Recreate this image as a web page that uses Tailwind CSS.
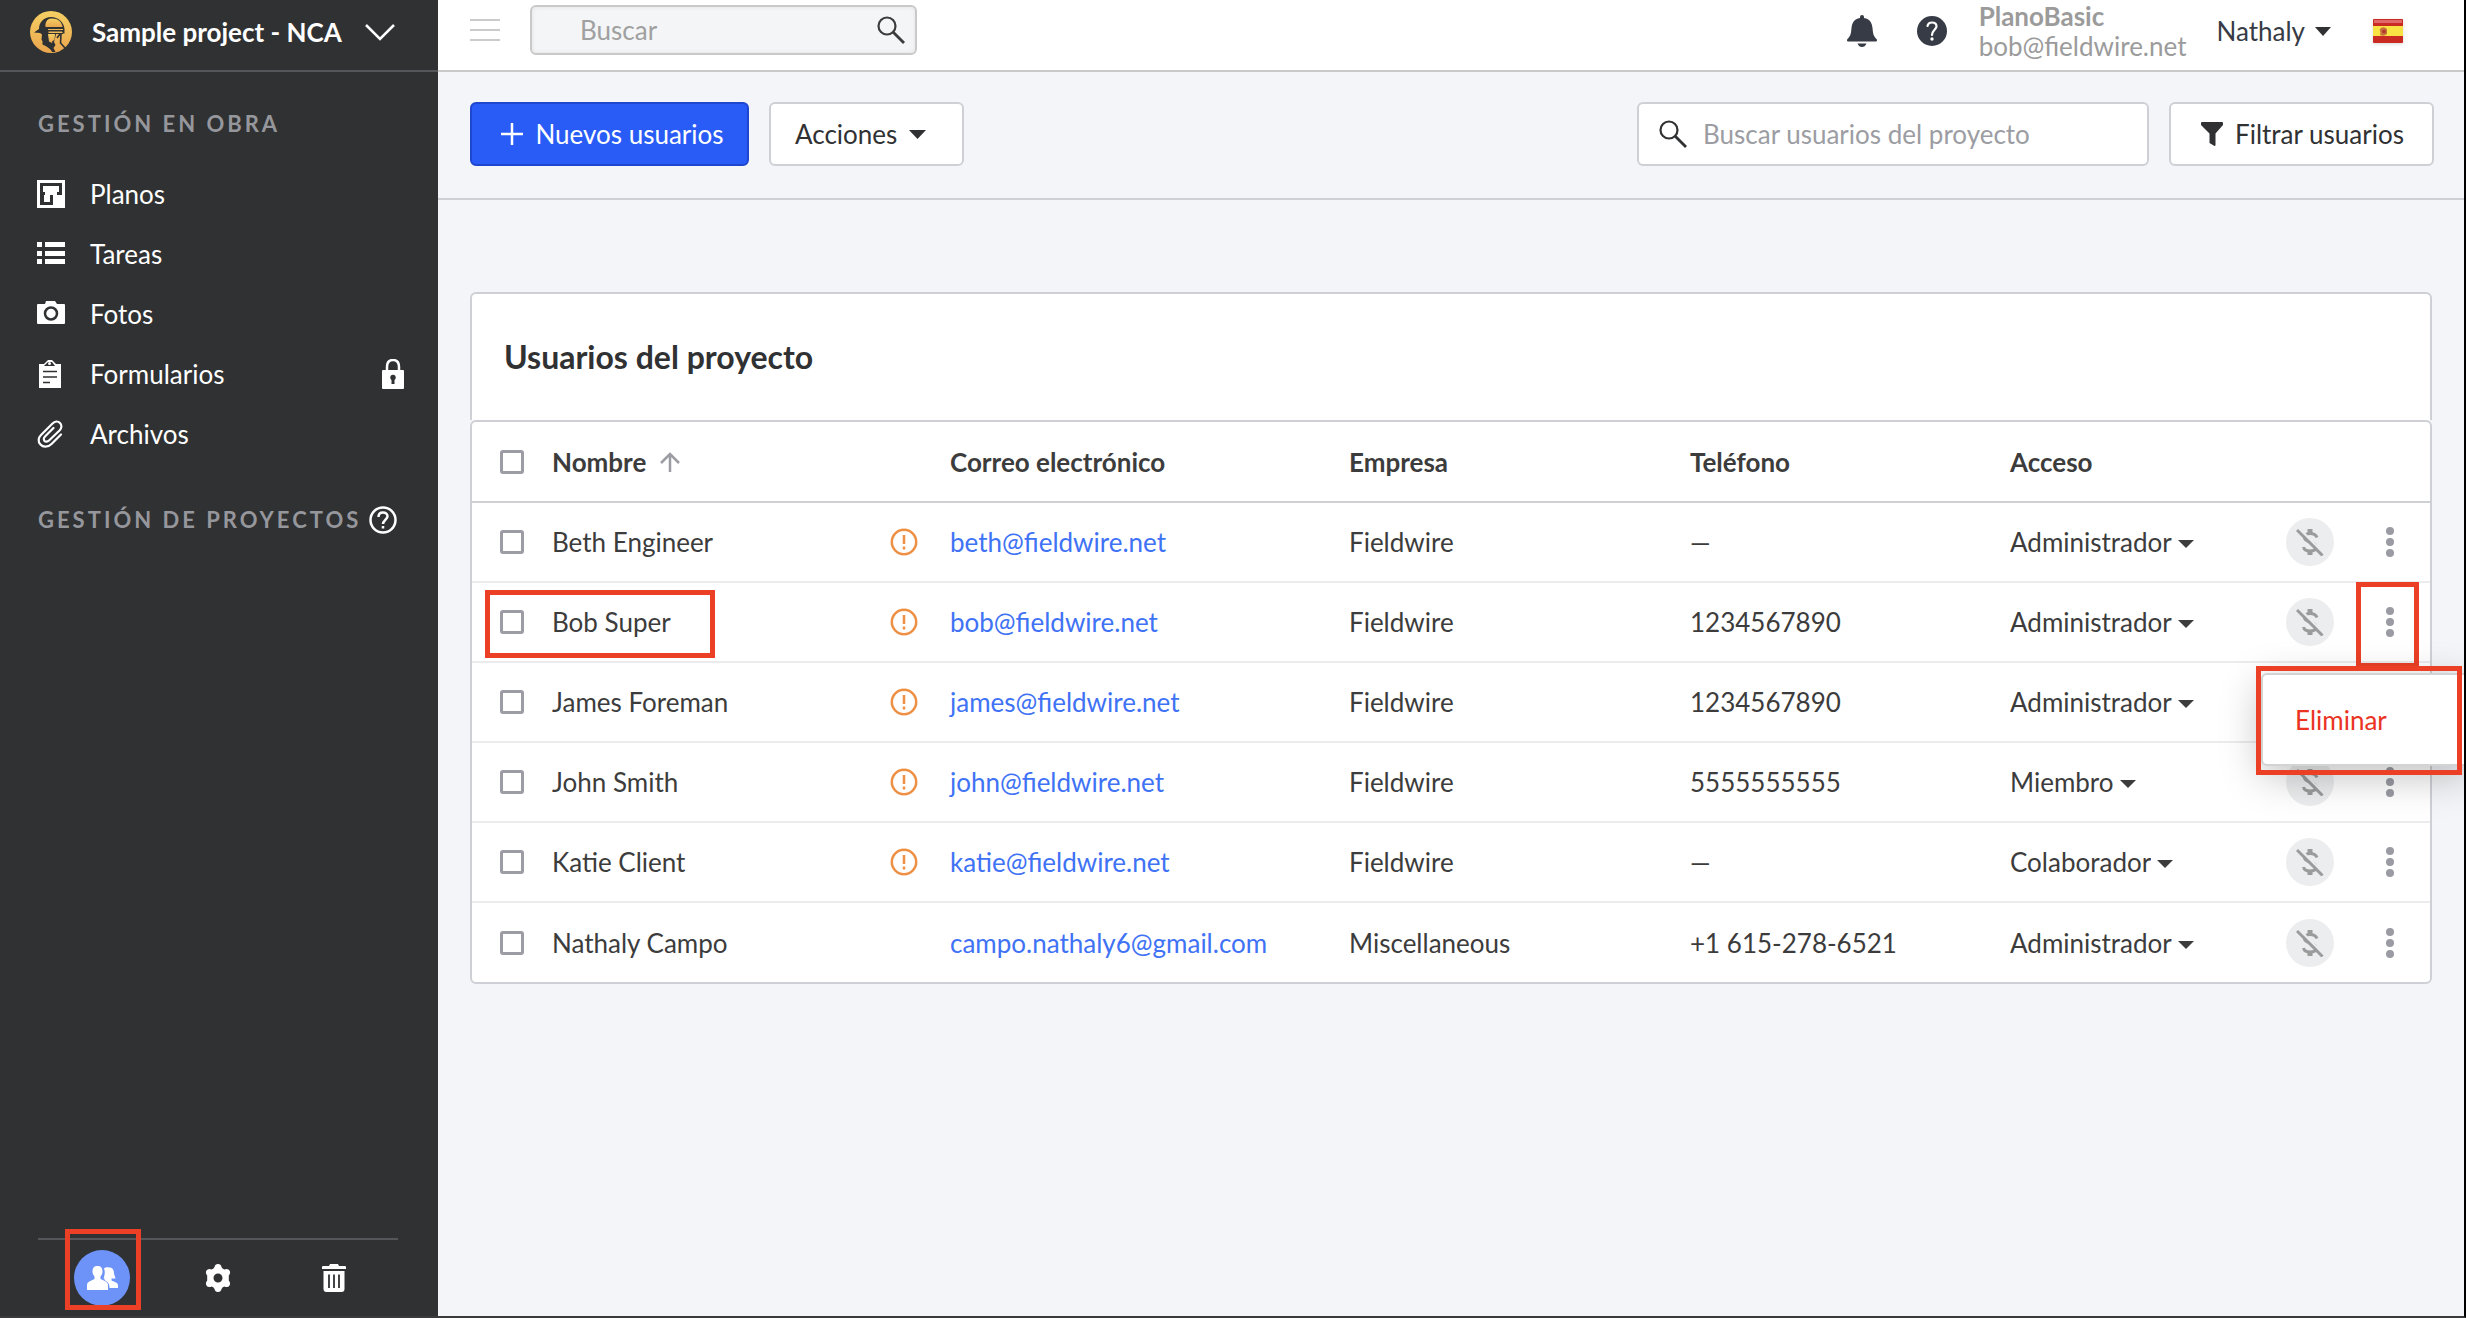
<!DOCTYPE html>
<html lang="es">
<head>
  <meta charset="UTF-8" />
  <meta name="viewport" content="width=device-width, initial-scale=1.0"/>
  <title>Usuarios del proyecto</title>
  <script src="https://cdn.jsdelivr.net/npm/@tailwindcss/browser@4"></script>
</head>
<body class="min-h-screen flex overflow-x-hidden border-r-2 border-b-2 border-r-black border-b-[#3a3a3c] bg-[#f4f5f8] font-[Lato,sans-serif] text-[26px] leading-8 text-[#3c3c3c]">

  <!-- Sidebar -->
  <aside class="w-[438px] shrink-0 bg-[#303133] text-white flex flex-col">
    <button class="h-[72px] shrink-0 border-b-2 border-[#55565a] flex items-center pl-[30px] pb-1.5 text-left">
      <svg class="w-[42px] h-[42px]" viewBox="0 0 42 42">
        <defs>
          <linearGradient id="gold" x1="0" y1="0" x2="0" y2="1">
            <stop offset="0" stop-color="#f6cf63"/>
            <stop offset="1" stop-color="#eba64e"/>
          </linearGradient>
        </defs>
        <circle cx="21" cy="21" r="21" fill="url(#gold)"/>
        <path d="M4 21.5 9 18C9 11 14 6 21 6s13 5 13.500 12v4.500H33L32 20.500H18.500V22H33v1h-7l-1 4.500-1 3.500 1.500 3-2 3 2 4h-3.500c-1-2.500-3-3.500-5.500-5.500-1-1-3-1-4-2v-3l-1-2 .5-5-2-1.500Z" fill="#303133"/>
        <path d="M15.500 16c-.5-4 1-8 5.500-8.500 6-.5 11 3 11.500 8.500Z" fill="url(#gold)"/>
        <path d="M18 23h7l-.5 6-2 1-.5 2-3-1.500Z" fill="url(#gold)"/>
        <path d="M18 18.500h15" stroke="#efb95a" stroke-width="1"/>
        <path d="M30 23l-3 4M31 23l-.5 9 4.500 5" fill="none" stroke="#303133" stroke-width="1.600"/>
      </svg>
      <span class="ml-5 font-bold">Sample project - NCA</span>
      <svg class="ml-[22px] w-8 h-5" viewBox="0 0 32 20" fill="none" stroke="#fff" stroke-width="2.500"><path d="M2 3l14 14L30 3"/></svg>
    </button>

    <h2 class="mt-9 pl-[38px] text-[22px] font-bold tracking-[3px] text-[#96979c]">GESTIÓN EN OBRA</h2>
    <nav class="mt-6 flex flex-col">
      <a href="#planos" class="h-[60px] pl-[37px] flex items-center gap-[25px]">
        <svg class="w-7 h-7" viewBox="0 0 28 28"><path fill="#fff" fill-rule="evenodd" d="M0 0h28v28H0ZM3 3v22h13V15h-3v7H7v-7h1v-3H6V6h16v6h-2v3h5V3Z"/><path fill="#fff" d="M7 7h14v4h-2v4h-8v-3H7Z"/></svg>
        <span>Planos</span>
      </a>
      <a href="#tareas" class="h-[60px] pl-[37px] flex items-center gap-[25px]">
        <svg class="w-7 h-7" viewBox="0 0 28 28" fill="#fff"><path d="M0 2h5v5H0zM8 2h20v5H8zM0 11h5v5H0zM8 11h20v5H8zM0 19h5v5H0zM8 19h20v5H8z"/></svg>
        <span>Tareas</span>
      </a>
      <a href="#fotos" class="h-[60px] pl-[37px] flex items-center gap-[25px]">
        <svg class="w-7 h-7" viewBox="0 0 28 28"><path fill="#fff" d="M8 4l1-3h9l2 3h7q1 0 1 1v18q0 1-1 1H1q-1 0-1-1V5q0-1 1-1Z"/><circle cx="14" cy="13.500" r="6" fill="#fff" stroke="#303133" stroke-width="2.500"/></svg>
        <span>Fotos</span>
      </a>
      <a href="#formularios" class="h-[60px] pl-[37px] pr-[34px] flex items-center gap-[25px]">
        <svg class="w-7 h-7" viewBox="0 0 28 28"><path fill="#fff" d="M2 4h5l4-4h4l4 4h5v24H2Z"/><path d="M7 6h11l-3-4h-4Z" fill="#303133"/><circle cx="12.500" cy="3.500" r="1.500" fill="#fff"/><path d="M6 11.500h14M6 17h14M6 22.500h7" stroke="#303133" stroke-width="1.600"/></svg>
        <span>Formularios</span>
        <svg class="ml-auto w-[22px] h-[30px]" viewBox="0 0 22 30"><path d="M5 12V8q0-7 6-7t6 7v4" fill="none" stroke="#fff" stroke-width="2.500"/><rect y="11" width="22" height="19" rx="1" fill="#fff"/><circle cx="11" cy="18.500" r="2.700" fill="#303133"/><path d="M9.500 19h3v6h-3z" fill="#303133"/></svg>
      </a>
      <a href="#archivos" class="h-[60px] pl-[37px] flex items-center gap-[25px]">
        <svg class="w-7 h-7" viewBox="0 0 28 28" fill="none" stroke="#fff" stroke-width="2.200" stroke-linecap="round"><path d="M24 14.500 14.500 24C11 27.500 6 27.500 3.500 24.500c-3-3-2-7 .5-9.500L15.500 3.500C18 1 21 1 23 3s2 5-.5 7.500L12 20.500c-1.500 1.500-3.500 1.500-4.500.5s-1-3 .5-4.500L16.500 8"/></svg>
        <span>Archivos</span>
      </a>
    </nav>
    <div class="mt-10 pl-[38px] flex items-center">
      <h2 class="text-[22px] font-bold tracking-[3px] text-[#96979c]">GESTIÓN DE PROYECTOS</h2>
      <button aria-label="Ayuda" class="ml-2">
        <svg class="w-7 h-7" viewBox="0 0 28 28" fill="none" stroke="#fff" stroke-width="2.500"><circle cx="14" cy="14" r="12.500"/><path d="M9.500 11c0-3 2-4.500 4.500-4.500s4.500 1.500 4.500 4-4.500 4-4.500 7.500M14 20v2.500"/></svg>
      </button>
    </div>

    <!-- Bottom tools -->
    <div class="relative mt-auto ml-[38px] mr-10 mb-2.5 pt-2.5 border-t-2 border-[#55565a] flex items-center">
      <div class="absolute left-[27px] -top-[11px] w-[76px] h-[81px] border-[5px] border-[#eb4026]"></div>
      <button aria-label="Usuarios" class="ml-9 w-14 h-14 rounded-full bg-[#6d93f8] flex items-center justify-center">
        <svg class="w-[31px] h-6" viewBox="0 0 31 24" fill="#fff"><path d="M10.500 0c3.500 0 5 2 5 5.500 0 2-1 4-2 5v2.500c3 1.500 7.500 2.500 7.500 6V24H0v-5c0-3.500 5-4.500 7.500-6v-2.500c-1-1-2-3-2-5C5.500 2 7 0 10.500 0Z"/><path d="M17 2.500C18 1.500 20 1 22 1.500c4 0 5 3 5 6l1.500 5h-4v2c2 1 6.500 2 6.500 4.500v3h-8.500c0-5-2-6-5-8v-1.500h-1c1-3 2-6 .5-10Z"/></svg>
      </button>
      <button aria-label="Ajustes" class="ml-[74px]">
        <svg class="w-7 h-7" viewBox="0 0 28 28"><path fill="#fff" fill-rule="evenodd" d="M10.500 3Q11 0 14 0t3.500 3l1 1.500 1.800 1q3.700-1.500 5.200 1t-.7 5v5q2.200 2.500.7 5t-5.200 1l-1.800 1-1 1.500Q17 28 14 28t-3.500-3l-1-1.500-1.800-1q-3.700 1.500-5.200-1t.7-5v-5Q1 9 2.500 6.500t5.200-1l1.800-1ZM14 9.500a4.500 4.500 0 1 0 0 9 4.500 4.500 0 0 0 0-9Z"/></svg>
      </button>
      <button aria-label="Papelera" class="ml-[90px]">
        <svg class="w-6 h-7" viewBox="0 0 24 28"><path fill="#fff" d="M7 2l1-2h8l1 2h6q1 0 1 1v2H0V3q0-1 1-1ZM1.500 7h21v18q0 3-3 3h-15q-3 0-3-3Z"/><path d="M7 10.500V24M12 10.500V24M17 10.500V24" stroke="#303133" stroke-width="1.800"/></svg>
      </button>
    </div>
  </aside>

  <!-- Main column -->
  <div class="flex-1 min-w-0">
    <header class="h-[72px] bg-white border-b-2 border-[#c9c9c9] flex items-center pl-8 pr-[61px]">
      <button aria-label="Menú" class="w-[30px] h-[22px] flex flex-col justify-between mb-2.5">
        <span class="h-0.5 w-full bg-[#cbcbcb]"></span>
        <span class="h-0.5 w-full bg-[#cbcbcb]"></span>
        <span class="h-0.5 w-full bg-[#cbcbcb]"></span>
      </button>
      <label class="ml-[30px] mb-2.5 w-[387px] h-[50px] border-2 border-[#c9c9c9] rounded-md bg-[#f4f5f7] shadow-[inset_0_0_4px_#e2e2e2] flex items-center pl-12 pr-2.5">
        <input type="text" aria-label="Buscar" placeholder="Buscar" class="flex-1 min-w-0 outline-none placeholder:text-[#a0a0a0]">
        <svg class="w-7 h-7" viewBox="0 0 28 28" fill="none" stroke="#3c3c3c" stroke-width="2.200"><circle cx="10" cy="10" r="8.500"/><path d="M16 16l11 11" stroke-width="2.800"/></svg>
      </label>

      <div class="ml-auto mb-2 flex items-center">
        <button aria-label="Notificaciones">
          <svg class="w-[30px] h-8" viewBox="0 0 30 32" fill="#363b45"><path d="M13 2q0-2 2-2t2 2v1c6 1 8 5 8.500 10 .5 6 1 8 4 11 1 1 .5 2.500-1 2.500h-27C0 26.500-.5 25 .5 24c3-3 3.500-5 4-11C5 8 7 4 13 3ZM10.500 28.500h9Q18 32 15 32t-4.500-3.500Z"/></svg>
        </button>
        <button aria-label="Ayuda" class="ml-10">
          <svg class="w-[30px] h-[30px]" viewBox="0 0 30 30" fill="none"><circle cx="15" cy="15" r="15" fill="#363b45"/><path d="M10.500 10c.5-2.500 2-3.500 4.500-3.500s4.500 1.500 4.500 4-4.500 4-4.500 8.500" stroke="#fff" stroke-width="2.200" stroke-linecap="round"/><circle cx="15" cy="23" r="1.700" fill="#fff"/></svg>
        </button>
        <div class="ml-8 leading-[30px] text-[#9b9b9b]">
          <div class="font-bold">PlanoBasic</div>
          <div>bob@fieldwire.net</div>
        </div>
        <button class="ml-[30px] flex items-center gap-2.5 text-[#363b45]">Nathaly
          <svg class="w-4 h-[9px]" viewBox="0 0 16 9" fill="#303133"><path d="M0 0h16L8 9Z"/></svg>
        </button>
        <button aria-label="Idioma: español" class="ml-[42px]">
          <svg class="w-[30px] h-6 drop-shadow" viewBox="0 0 30 24"><rect width="30" height="24" rx="1" fill="#c92a22"/><path fill="#e0686a" d="M1 1h28v3H1z"/><path fill="#f8e244" d="M0 7h30v10H0z"/><path fill="#c8743a" d="M8 9q-2 1-1 3t0 4q4 2 7-1V10q-3-3-6-1Z"/><circle cx="11" cy="12.500" r="2" fill="#b3382c"/></svg>
        </button>
      </div>
    </header>

    <!-- Toolbar -->
    <div class="h-32 border-b-2 border-[#cfd0d6] flex items-center pl-8 pr-[30px] pb-0.5">
      <button class="w-[279px] h-16 rounded-md border-2 border-[#1e46cf] bg-[#295cf6] text-white flex items-center justify-center gap-3 pl-1.5">
        <svg class="w-[22px] h-[22px]" viewBox="0 0 22 22" stroke="#fff" stroke-width="2.500"><path d="M11 0v22M0 11h22"/></svg>
        Nuevos usuarios
      </button>
      <button class="ml-5 w-[195px] h-16 rounded-md border-2 border-[#cfd0d6] bg-white text-[#303133] flex items-center pl-6 gap-3">Acciones
        <svg class="w-[17px] h-[9px]" viewBox="0 0 17 9" fill="#303133"><path d="M0 0h17L8.500 9Z"/></svg>
      </button>
      <label class="ml-auto w-[512px] h-16 rounded-md border-2 border-[#cfd0d6] bg-white flex items-center pl-5 pr-4 gap-4">
        <svg class="w-7 h-7" viewBox="0 0 28 28" fill="none" stroke="#303133" stroke-width="2.200"><circle cx="10" cy="10" r="8.500"/><path d="M16 16l11 11" stroke-width="2.800"/></svg>
        <input type="text" aria-label="Buscar usuarios del proyecto" placeholder="Buscar usuarios del proyecto" class="flex-1 min-w-0 outline-none placeholder:text-[#9c9da3]">
      </label>
      <button class="ml-5 w-[265px] h-16 rounded-md border-2 border-[#cfd0d6] bg-white text-[#303133] flex items-center justify-center gap-3 pl-0.5">
        <svg class="w-[22px] h-6" viewBox="0 0 22 24" fill="#303133"><path d="M1 0h20q1 0 1 1v2l-7.500 8.500V23q0 1-1 1L8.500 21V11.500L0 3V1q0-1 1-1Z"/></svg>
        Filtrar usuarios
      </button>
    </div>

    <!-- Project users -->
    <main class="mt-[92px] mx-8 text-[#3c3c3c]">
      <div class="h-32 border-2 border-b-0 border-[#cfd0d6] rounded-t-md bg-white flex items-center pl-8">
        <h1 class="text-[32px] font-bold text-[#303133]">Usuarios del proyecto</h1>
      </div>
      <div class="border-2 border-[#cfd0d6] rounded-md bg-white">
        <table class="w-full table-fixed text-left">
          <thead>
            <tr class="h-20 border-b-2 border-[#cfd0d6]">
              <th class="w-20 pl-7"><input type="checkbox" aria-label="Seleccionar todo" class="block appearance-none w-6 h-6 rounded-[3px] border-3 border-[#9c9ca4] bg-white"></th>
              <th class="w-[338px] font-bold">
                <button class="flex items-center gap-3.5">Nombre
                  <svg class="w-5 h-5" viewBox="0 0 20 20" fill="none" stroke="#9c9ca4" stroke-width="2.500"><path d="M10 20V2M1 11l9-9 9 9"/></svg>
                </button>
              </th>
              <th class="w-[60px]"></th>
              <th class="w-[399px] font-bold">Correo electrónico</th>
              <th class="w-[341px] font-bold">Empresa</th>
              <th class="w-80 font-bold">Teléfono</th>
              <th class="w-[276px] font-bold">Acceso</th>
              <th class="w-[84px]"></th>
              <th class="w-[60px]"></th>
            </tr>
          </thead>
          <tbody id="users-table-body">
            <!-- JS will populate rows here -->
          </tbody>
        </table>
      </div>
    </main>
  </div>

  <script>
    const users = [
      { name: 'Beth Engineer', email: 'beth@fieldwire.net', company: 'Fieldwire', phone: '—', access: 'Administrador', pending: true },
      { name: 'Bob Super', email: 'bob@fieldwire.net', company: 'Fieldwire', phone: '1234567890', access: 'Administrador', pending: true, menuOpen: true },
      { name: 'James Foreman', email: 'james@fieldwire.net', company: 'Fieldwire', phone: '1234567890', access: 'Administrador', pending: true },
      { name: 'John Smith', email: 'john@fieldwire.net', company: 'Fieldwire', phone: '5555555555', access: 'Miembro', pending: true },
      { name: 'Katie Client', email: 'katie@fieldwire.net', company: 'Fieldwire', phone: '—', access: 'Colaborador', pending: true },
      { name: 'Nathaly Campo', email: 'campo.nathaly6@gmail.com', company: 'Miscellaneous', phone: '+1 615-278-6521', access: 'Administrador', pending: false }
    ];
    const roles = ['Administrador', 'Miembro', 'Colaborador'];

    const alertIcon = `
      <svg class="w-7 h-7" viewBox="0 0 28 28" fill="none" stroke="#ee9044" stroke-width="2.500"><circle cx="14" cy="14" r="12.200"/><path d="M14 7v9M14 18.500v3"/></svg>`;

    // Open row menu and the marks drawn over it
    const rowMenu = `
      <div class="absolute z-10 right-[11px] -top-px w-[63px] h-[86px] border-[5px] border-[#eb4026]"></div>
      <div class="absolute z-10 -right-[40px] top-[90px] w-[209px] h-[93px] rounded-md border-2 border-[#d2d4d4] bg-white shadow-[0_10px_40px_rgba(0,0,0,0.25)] flex items-center pl-8">
        <button class="text-[#ea3323]">Eliminar</button>
      </div>
      <div class="absolute z-20 -right-8 top-[83px] w-[206px] h-[109px] border-[5px] border-[#eb4026]"></div>`;

    document.getElementById('users-table-body').innerHTML = users.map(user => `
      <tr class="h-20 border-b-2 border-[#ececee] last:border-b-0">
        <td class="relative pl-7">
          <input type="checkbox" aria-label="Seleccionar ${user.name}" class="block appearance-none w-6 h-6 rounded-[3px] border-3 border-[#9c9ca4] bg-white">
          ${user.menuOpen ? '<div class="absolute left-[13px] top-[7px] w-[230px] h-[68px] border-[5px] border-[#eb4026]"></div>' : ''}
        </td>
        <td>${user.name}</td>
        <td>${user.pending ? alertIcon : ''}</td>
        <td><a href="mailto:${user.email}" class="text-[#4072f5]">${user.email}</a></td>
        <td>${user.company}</td>
        <td>${user.phone}</td>
        <td>
          <label class="flex items-center gap-1.5">
            <select aria-label="Acceso de ${user.name}" class="appearance-none field-sizing-content outline-none">
              ${roles.map(role => `<option ${role === user.access ? 'selected' : ''}>${role}</option>`).join('')}
            </select>
            <svg class="w-4 h-2 mt-1" viewBox="0 0 16 8" fill="#3c3c3c"><path d="M0 0h16L8 8Z"/></svg>
          </label>
        </td>
        <td>
          <button aria-label="Sin presupuesto" class="w-12 h-12 rounded-full bg-[#ecedee] flex items-center justify-center">
            <svg class="w-7 h-7" viewBox="0 0 28 28" fill="none" stroke="#9a9b9b" stroke-width="3"><path d="M14 1v5M14 22v5" stroke-width="5"/><path d="M21 9.500C20 7 17.500 5.500 14 5.500c-3 0-5.500 1.500-5.500 4s2 3.500 5.500 4.500 6 2.500 6 5-2.500 4-6 4c-3.500 0-6-1.500-6.500-4"/><path d="M3 .5l26 26" stroke="#ecedee" stroke-width="2.500"/><path d="M1 2l25.500 25.500" stroke-width="3"/></svg>
          </button>
        </td>
        <td class="relative">
          <button aria-label="Más opciones" class="block ml-4">
            <svg class="w-2 h-[30px]" viewBox="0 0 8 30" fill="#9a9ba3"><circle cx="4" cy="4" r="4"/><circle cx="4" cy="15" r="4"/><circle cx="4" cy="26" r="4"/></svg>
          </button>
          ${user.menuOpen ? rowMenu : ''}
        </td>
      </tr>`).join('');
  </script>

</body>
</html>
